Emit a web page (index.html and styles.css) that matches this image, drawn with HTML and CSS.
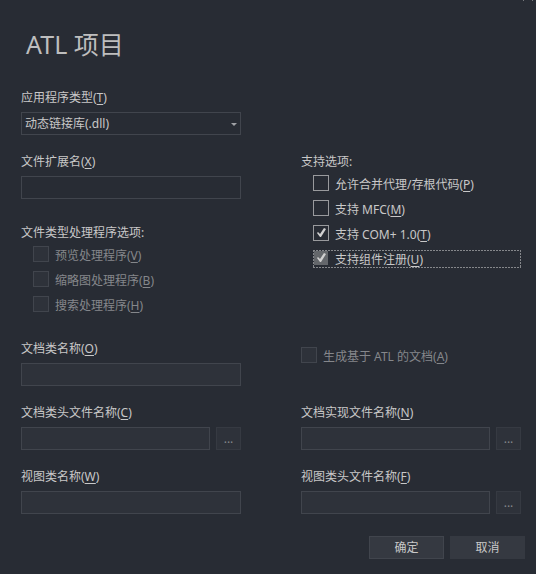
FILE: index.html
```html
<!DOCTYPE html>
<html lang="zh-CN">
<head>
<meta charset="utf-8">
<title>ATL 项目</title>
<link rel="stylesheet" href="styles.css">
</head>
<body>
<form class="dialog">
  <button class="close" type="button" aria-label="关闭">
    <svg width="10" height="10" viewBox="0 0 10 10"><path d="M0.5 0.5l9 9M9.5 0.5l-9 9"/></svg>
  </button>
  <h1 class="title">ATL 项目</h1>
  <div class="grid">
    <div class="field">
      <label for="app-type">应用程序类型(<u>T</u>)</label>
      <div class="select">
        <select id="app-type"><option>动态链接库(.dll)</option></select>
        <svg class="arrow" width="6" height="3" viewBox="0 0 6 3"><path d="M0 0h6L3 3z"/></svg>
      </div>
    </div>
    <div class="stack">
      <div class="field">
        <label for="ext">文件扩展名(<u>X</u>)</label>
        <input class="text" id="ext" type="text">
      </div>
      <fieldset class="group" disabled>
        <legend>文件类型处理程序选项:</legend>
        <label class="check"><input type="checkbox" disabled><span>预览处理程序(<u>V</u>)</span></label>
        <label class="check"><input type="checkbox" disabled><span>缩略图处理程序(<u>B</u>)</span></label>
        <label class="check"><input type="checkbox" disabled><span>搜索处理程序(<u>H</u>)</span></label>
      </fieldset>
    </div>
    <fieldset class="group">
      <legend>支持选项:</legend>
      <label class="check"><input type="checkbox"><span>允许合并代理/存根代码(<u>P</u>)</span></label>
      <label class="check"><input type="checkbox"><span>支持 MFC(<u>M</u>)</span></label>
      <label class="check"><input type="checkbox" checked><span>支持 COM+ 1.0(<u>T</u>)</span></label>
      <label class="check current"><input type="checkbox" checked><span>支持组件注册(<u>U</u>)</span></label>
    </fieldset>
  </div>
  <div class="grid names">
    <div class="field">
      <label for="doc-class">文档类名称(<u>O</u>)</label>
      <input class="text" id="doc-class" type="text" disabled>
    </div>
    <label class="check standalone"><input type="checkbox" disabled><span>生成基于 ATL 的文档(<u>A</u>)</span></label>
    <div class="field">
      <label for="doc-header">文档类头文件名称(<u>C</u>)</label>
      <div class="browse"><input class="text" id="doc-header" type="text" disabled><button class="more" type="button" disabled>...</button></div>
    </div>
    <div class="field">
      <label for="doc-impl">文档实现文件名称(<u>N</u>)</label>
      <div class="browse"><input class="text" id="doc-impl" type="text" disabled><button class="more" type="button" disabled>...</button></div>
    </div>
    <div class="field">
      <label for="view-class">视图类名称(<u>W</u>)</label>
      <input class="text" id="view-class" type="text" disabled>
    </div>
    <div class="field">
      <label for="view-header">视图类头文件名称(<u>F</u>)</label>
      <div class="browse"><input class="text" id="view-header" type="text" disabled><button class="more" type="button" disabled>...</button></div>
    </div>
  </div>
  <div class="actions">
    <button class="action default" type="submit">确定</button>
    <button class="action" type="button">取消</button>
  </div>
</form>
</body>
</html>
```
FILE: styles.css
```css
* { box-sizing: border-box; }

body {
  margin: 0;
  background: #282c34;
  color: #c8c8c8;
  font: 12px/16px "Noto Sans", "Noto Sans CJK SC", sans-serif;
}

input, select, button { font: inherit; color: inherit; margin: 0; }

u { text-underline-offset: 2px; text-decoration-thickness: 1px; }

.dialog {
  position: relative;
  padding: 26px 15px 15px 21px;
}

.close {
  position: absolute;
  top: -9px;
  right: 3px;
  width: 10px;
  height: 10px;
  padding: 0;
  border: 0;
  background: none;
}
.close svg { display: block; fill: none; stroke: #c8c8c8; }

.title {
  margin: 0 0 28px 5px;
  color: #bebebe;
  font-size: 25px;
  line-height: 36px;
  font-weight: 400;
}

.grid {
  display: grid;
  grid-template-columns: 1fr 1fr;
  column-gap: 60px;
  row-gap: 19px;
  align-items: start;
}
.grid > .field:first-child { grid-column: 1; }
.grid > .stack { grid-column: 1; }
.names { margin-top: 27px; }

.field { display: flex; flex-direction: column; gap: 6px; }
.stack { display: flex; flex-direction: column; gap: 26px; }

.text, .select select {
  width: 100%;
  min-width: 0;
  height: 23px;
  padding: 0 3px;
  border: 1px solid #41454d;
  border-radius: 0;
  background: #282c34;
}
.text:disabled { background: #2e323a; }

.select { position: relative; }
.select select { display: block; appearance: none; }
.arrow {
  position: absolute;
  right: 4px;
  top: 11px;
  fill: #a0a2a6;
  pointer-events: none;
}

.group {
  display: flex;
  flex-direction: column;
  gap: 7px;
  min-width: 0;
  margin: 0;
  padding: 5px 0 0 12px;
  border: 0;
}
.group legend { margin-left: -12px; padding: 0; }

.check {
  display: flex;
  gap: 6px;
  height: 18px;
  line-height: 20px;
}
.check:has(input:disabled) { color: #85878b; }
.check input {
  appearance: none;
  width: 16px;
  height: 16px;
  border: 1px solid #999a9d;
}
.check input:disabled { border-color: #41454d; background: #2e323a; }
.check input:checked::before {
  content: "";
  display: block;
  width: 14px;
  height: 14px;
  background: #d0d0d0;
  clip-path: polygon(3px 7px, 4px 6px, 6px 8px, 10px 2px, 12px 3px, 7px 11px, 6px 11px);
}
.current {
  --across: repeating-linear-gradient(to right, #85878b 0 2px, transparent 2px 3px);
  --down: repeating-linear-gradient(to bottom, #85878b 0 2px, transparent 2px 3px);
  background:
    var(--across) top / 100% 1px no-repeat,
    var(--across) bottom / 100% 1px no-repeat,
    var(--down) left / 1px 100% no-repeat,
    var(--down) right / 1px 100% no-repeat;
}
.current input {
  border-color: transparent;
  background: #64676b padding-box;
}
.standalone { margin-top: 6px; }

.browse { display: flex; gap: 6px; }
.more {
  flex: none;
  width: 25px;
  height: 23px;
  padding: 0;
  border: 1px solid #363a42;
  background: #2e323a;
  color: #85878b;
}

.actions {
  display: flex;
  justify-content: flex-end;
  gap: 6px;
  margin: 22px -4px 0 0;
}
.action {
  width: 75px;
  height: 23px;
  padding: 0;
  border: 1px solid #353941;
  background: #353941;
}
.default { border-color: #41454d; }
```
